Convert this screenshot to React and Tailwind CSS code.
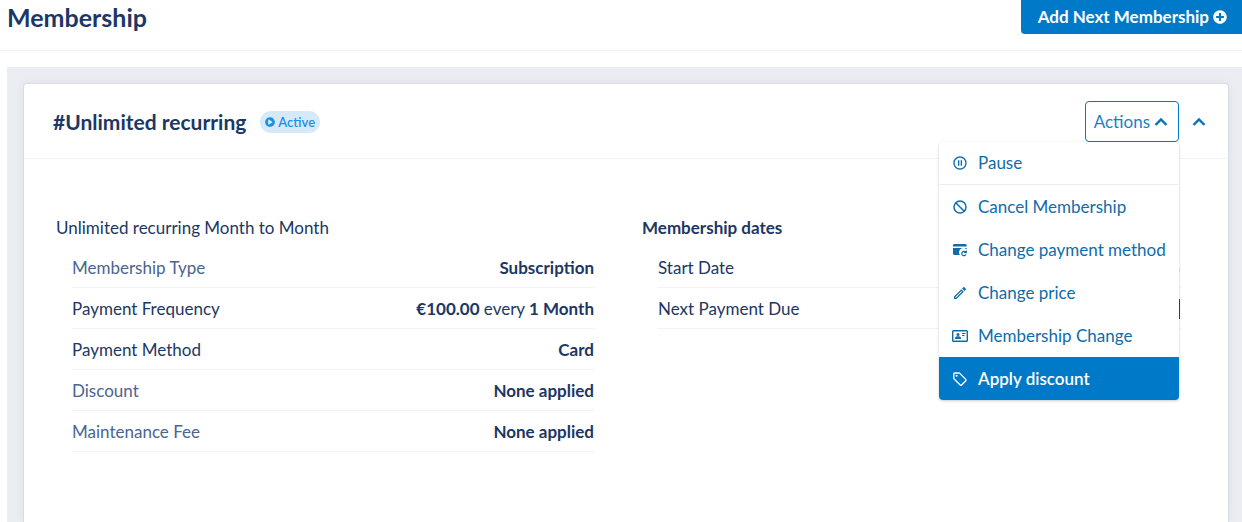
import React, { useState } from "react";
import clsx from "clsx";
import { FaPlusCircle, FaPlayCircle } from "react-icons/fa";
import { MdOutlinePauseCircle, MdOutlineEdit } from "react-icons/md";

const BlockIcon = () => (
  <svg viewBox="0 0 16 16" className="h-4 w-4" fill="none" stroke="currentColor" strokeWidth="1.5">
    <circle cx="8" cy="8" r="6" />
    <path d="m3.800 3.800 8.400 8.400" />
  </svg>
);

const PaymentIcon = () => (
  <svg viewBox="0 0 16 16" className="h-4 w-4" fill="none">
    <path d="M2.4 2h10.8c.8 0 1.4.6 1.4 1.3V4.500H1V3.300C1 2.600 1.600 2 2.400 2Z" fill="currentColor" />
    <path d="M1 6h13.600v1.600a4.200 4.200 0 0 0-6.600 5.400H2.400C1.600 13 1 12.400 1 11.600V6Z" fill="currentColor" />
    <path d="M13.600 10a2.200 2.200 0 1 0 .3 2.600M14.300 8.400v2.200h-2.200" stroke="currentColor" strokeWidth="1.200" />
  </svg>
);

const ContactIcon = () => (
  <svg viewBox="0 0 16 14" className="h-3.5 w-4" fill="none">
    <rect x="0.700" y="1.700" width="14.600" height="10.600" rx="0.800" stroke="currentColor" strokeWidth="1.400" />
    <circle cx="6" cy="5.400" r="1.500" fill="currentColor" />
    <path d="M3 9.900V9c0-1.100 1.500-1.700 3-1.700S9 7.900 9 9v.9H3Z" fill="currentColor" />
    <path d="M10 4.500h3.500M10 6.500h2.500" stroke="currentColor" strokeWidth="1" />
  </svg>
);

const TagIcon = () => (
  <svg viewBox="0 0 16 16" className="h-4 w-4" fill="none">
    <path d="M1.800 2.800v4.400c0 .3.100.6.400.8l6 6c.4.400 1 .4 1.400 0l4.200-4.200c.4-.4.400-1 0-1.400l-6-6c-.2-.2-.5-.4-.8-.4H2.600c-.5 0-.8.300-.8.800Z" stroke="currentColor" strokeWidth="1.300" />
    <circle cx="4.600" cy="4.800" r="1" fill="currentColor" />
  </svg>
);

const Chevron = () => (
  <svg viewBox="0 0 14 10" className="h-2.5 w-3.5" fill="none">
    <path d="m1.500 8 5.500-5.500L12.500 8" stroke="currentColor" strokeWidth="2.400" />
  </svg>
);

const ACTIONS = [
  { label: "Pause", icon: MdOutlinePauseCircle, divider: true },
  { label: "Cancel Membership", icon: BlockIcon },
  { label: "Change payment method", icon: PaymentIcon },
  { label: "Change price", icon: MdOutlineEdit },
  { label: "Membership Change", icon: ContactIcon },
  { label: "Apply discount", icon: TagIcon, active: true },
];

const DETAILS = [
  { label: "Membership Type", value: <b className="font-bold">Subscription</b>, muted: true },
  {
    label: "Payment Frequency",
    value: (
      <>
        <b className="font-bold">€100.00</b> every <b className="font-bold">1 Month</b>
      </>
    ),
  },
  { label: "Payment Method", value: <b className="font-bold">Card</b> },
  { label: "Discount", value: <b className="font-bold">None applied</b>, muted: true },
  { label: "Maintenance Fee", value: <b className="font-bold">None applied</b>, muted: true },
];

const DATES = [
  { label: "Start Date", value: <span className="text-[#0079c8]">5</span> },
  { label: "Next Payment Due", value: <span className="block h-5 w-4 bg-[#00528a]" /> },
];

function Row({ label, value, muted }) {
  return (
    <div className="flex items-center justify-between border-b border-[#f1f3f5] pt-[9px] pb-[7px]">
      <dt className={clsx(muted && "text-[#4a6590]")}>{label}</dt>
      <dd>{value}</dd>
    </div>
  );
}

function ActionsMenu() {
  const [open, setOpen] = useState(true);

  return (
    <div className="relative">
      <button
        type="button"
        aria-expanded={open}
        onClick={() => setOpen(!open)}
        className="flex h-[41px] items-center gap-1 rounded border border-[#0079c8] pr-2.5 pl-2 text-[#1b7fc4]"
      >
        Actions
        <span className="text-[#0073bd]">
          <Chevron />
        </span>
      </button>
      {open && (
        <ul className="absolute right-0 top-full z-10 w-60 overflow-hidden rounded bg-white shadow-[0_1px_3px_rgba(0,0,0,0.2)]">
          {ACTIONS.map(({ label, icon: Icon, divider, active }) => (
            <li key={label} className={clsx("flex h-[43px]", divider && "border-b border-[#e6f0f7]")}>
              <button
                type="button"
                className={clsx(
                  "flex w-full items-center gap-[9px] px-3 text-left whitespace-nowrap",
                  active ? "bg-[#0079c8] font-semibold text-white" : "text-[#0f6cab]"
                )}
              >
                <span className="flex w-[18px] justify-center">
                  <Icon className="h-4 w-4" />
                </span>
                {label}
              </button>
            </li>
          ))}
        </ul>
      )}
    </div>
  );
}

export default function App() {
  return (
    <div className="flex min-h-screen flex-col bg-white font-['Lato',sans-serif] text-[17px] leading-6 text-[#1c3764]">
      <header className="flex items-start justify-between border-b border-[#f1f3f5] pb-4 pl-[7px]">
        <h1 className="text-[25px] leading-[34px] font-bold">Membership</h1>
        <button
          type="button"
          className="flex h-[34px] items-center gap-1 rounded-bl bg-[#0079c8] pr-[15px] pl-[17px] font-bold text-white"
        >
          Add Next Membership
          <FaPlusCircle className="h-3.5 w-3.5" />
        </button>
      </header>

      <main className="mt-4 ml-[7px] flex flex-1 flex-col bg-[#ecedf2] pt-4 pr-[13px] pl-4">
        <section className="flex-1 rounded-t-sm border border-b-0 border-[#d9dce2] bg-white shadow-[0_0_12px_rgba(0,0,0,0.05)]">
          <div className="flex items-center border-b border-[#f1f3f5] pt-[17px] pr-[22px] pb-4 pl-[29px]">
            <h2 className="text-[21px] font-bold">#Unlimited recurring</h2>
            <span className="ml-3.5 flex h-[22px] items-center gap-[3px] rounded-full bg-[#d5e9f8] px-[5px] text-[13px] font-semibold text-[#1791ea]">
              <FaPlayCircle className="h-2.5 w-2.5" />
              Active
            </span>
            <div className="ml-auto flex items-center gap-[13px]">
              <ActionsMenu />
              <button type="button" aria-label="Collapse membership" className="text-[#0073bd]">
                <Chevron />
              </button>
            </div>
          </div>

          <div className="grid grid-cols-2 gap-12 pt-[57px] pr-12 pl-8">
            <div>
              <h3 className="mb-[7px]">Unlimited recurring Month to Month</h3>
              <dl className="pl-4">
                {DETAILS.map((row) => (
                  <Row key={row.label} {...row} />
                ))}
              </dl>
            </div>
            <div>
              <h3 className="mb-[7px] font-bold">Membership dates</h3>
              <dl className="pl-4">
                {DATES.map((row) => (
                  <Row key={row.label} {...row} />
                ))}
              </dl>
            </div>
          </div>
        </section>
      </main>
    </div>
  );
}
